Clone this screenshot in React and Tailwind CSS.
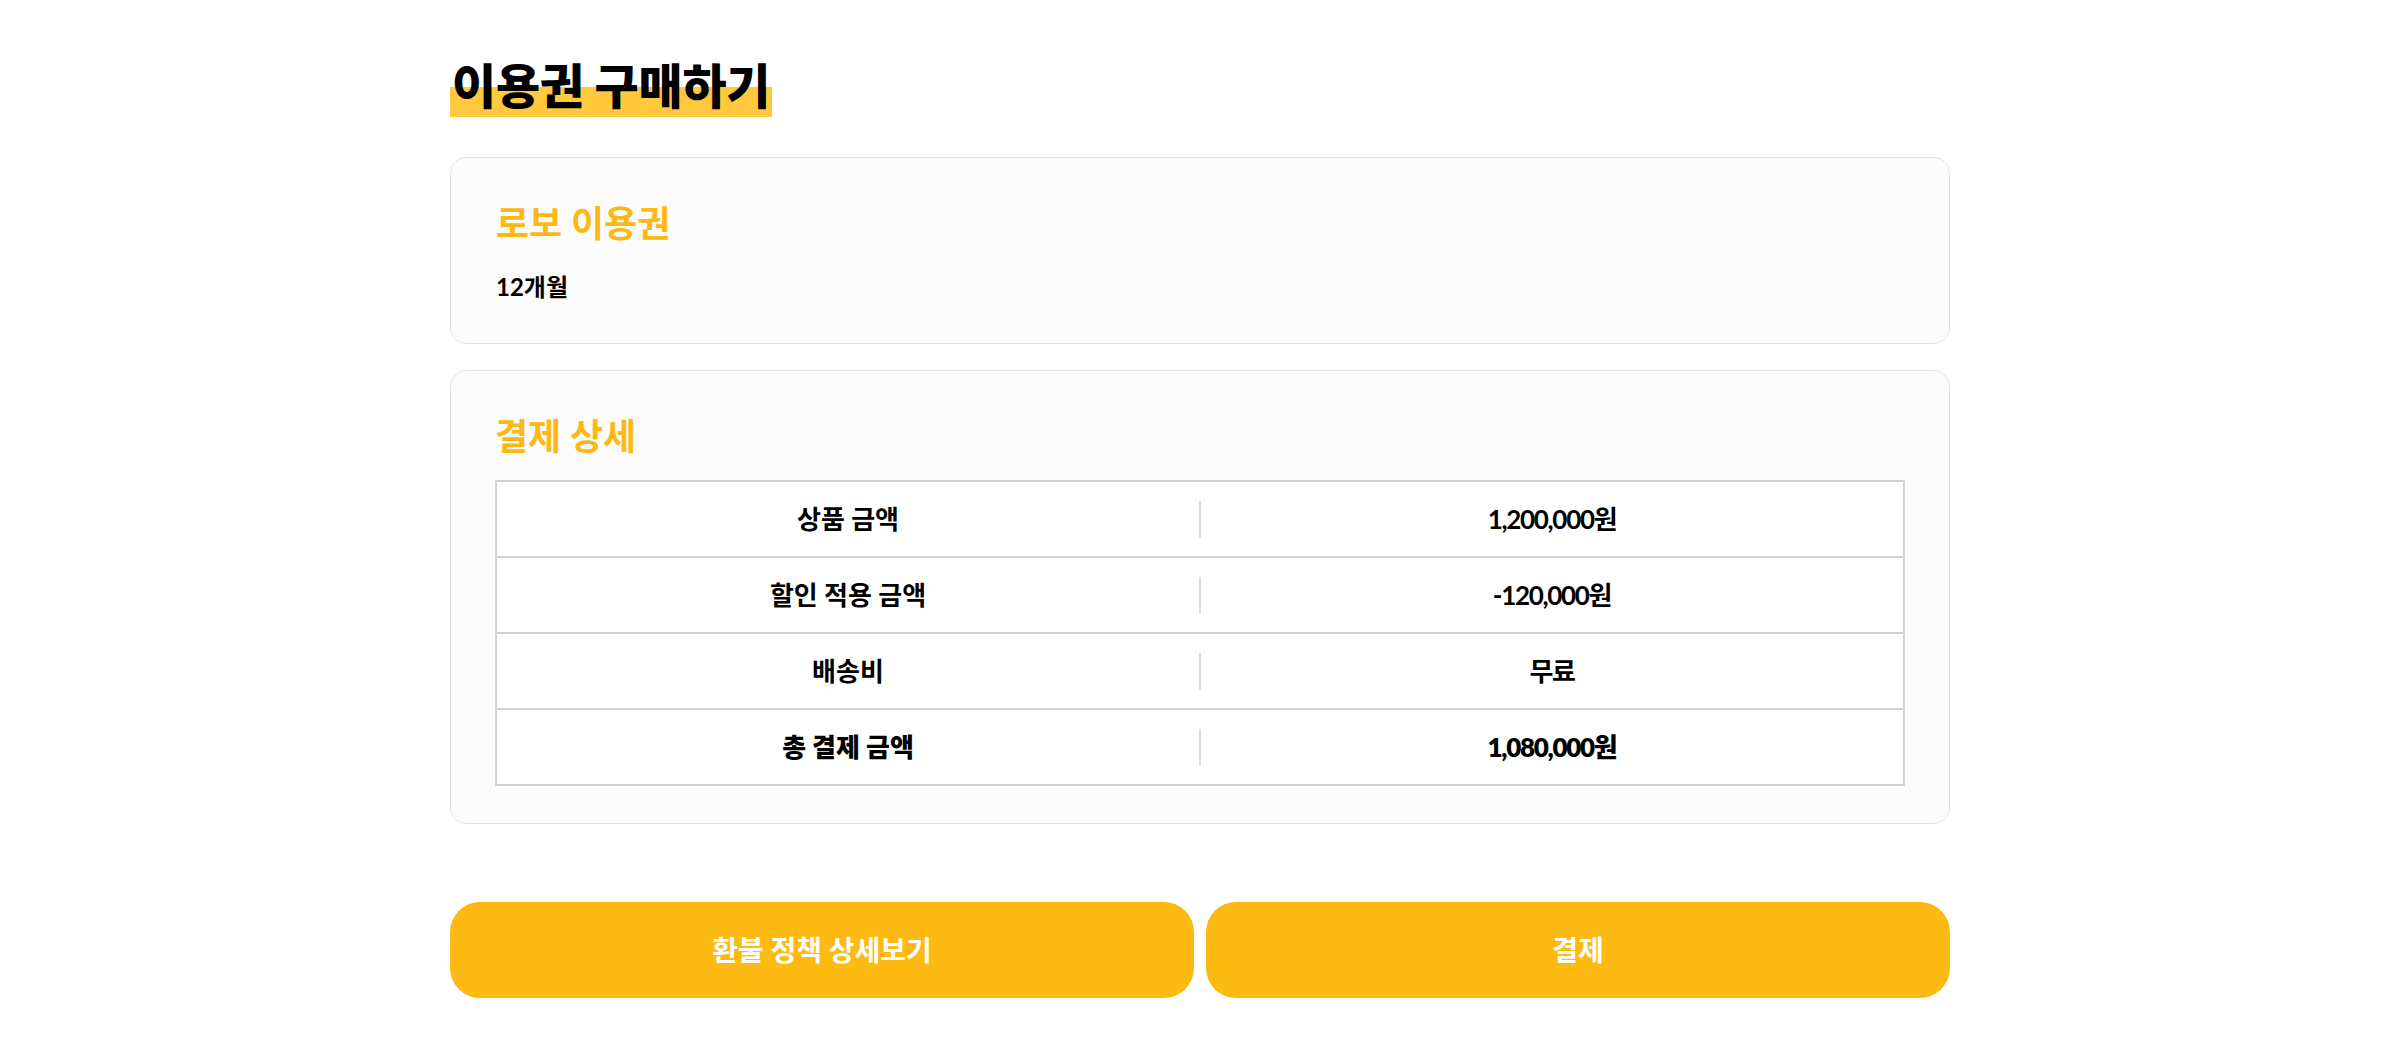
export default function App() {
  const rows = [
    { label: "상품 금액", value: "1,200,000원", bold: false },
    { label: "할인 적용 금액", value: "-120,000원", bold: false },
    { label: "배송비", value: "무료", bold: false },
    { label: "총 결제 금액", value: "1,080,000원", bold: true },
  ];
  return (
    <div className="min-h-screen bg-white font-['Lato','Noto_Sans_CJK_KR',sans-serif] text-black">
      <div className="mx-auto w-[1500px] pt-[55px]">
        <h1 className="block w-fit px-[2px] text-[48px] font-extrabold leading-[62px] tracking-[-0.005em] bg-[linear-gradient(to_top,#ffc83d_30px,transparent_30px)]">
          이용권 구매하기
        </h1>

        <section className="mt-[40px] rounded-[16px] border border-[#e2e2e2] bg-[#fcfcfc] px-[45px] pt-[41px] pb-[40px]">
          <h2 className="text-[36px] font-bold leading-[48px] text-[#fdb813]">로보 이용권</h2>
          <p className="mt-[24px] text-[24px] font-bold leading-[32px]">12개월</p>
        </section>

        <section className="mt-[26px] rounded-[16px] border border-[#e2e2e2] bg-[#fcfcfc] px-[44px] pt-[41px] pb-[37px]">
          <h2 className="text-[36px] font-bold leading-[48px] text-[#fdb813]">결제 상세</h2>
          <div className="mt-[20px] border-2 border-[#d2d2d2] bg-white">
            {rows.map((r, i) => (
              <div
                key={r.label}
                className={
                  i < rows.length - 1
                    ? "flex h-[76px] items-center border-b-2 border-[#d2d2d2]"
                    : "flex h-[74px] items-center"
                }
              >
                <div
                  className={
                    r.bold
                      ? "flex-1 text-center text-[26px] font-extrabold"
                      : "flex-1 text-center text-[26px] font-bold"
                  }
                >
                  {r.label}
                </div>
                <div className="h-[37px] w-[2px] bg-[#dcdcdc]" />
                <div
                  className={
                    r.bold
                      ? "flex-1 text-center text-[26px] font-extrabold tracking-[-0.05em]"
                      : "flex-1 text-center text-[26px] font-bold tracking-[-0.05em]"
                  }
                >
                  {r.value}
                </div>
              </div>
            ))}
          </div>
        </section>

        <div className="mt-[78px] flex gap-[12px]">
          <button className="h-[96px] flex-1 rounded-[30px] bg-[#fdba12] text-[28px] font-bold text-white">
            환불 정책 상세보기
          </button>
          <button className="h-[96px] flex-1 rounded-[30px] bg-[#fdba12] text-[28px] font-bold text-white">
            결제
          </button>
        </div>
      </div>
    </div>
  );
}
